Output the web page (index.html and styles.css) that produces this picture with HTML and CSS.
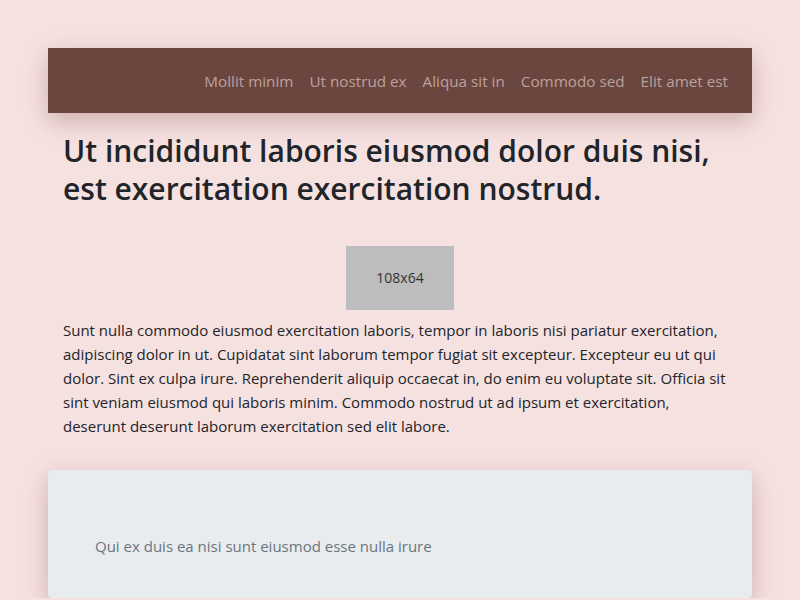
FILE: index.html
```html
<!DOCTYPE html>
<html>
<head>
<meta charset="utf-8">
<link rel="stylesheet" href="styles.css">
</head>
<body>
<div class="page">
  <nav class="navbar">
    <a class="nav-link">Mollit minim</a>
    <a class="nav-link">Ut nostrud ex</a>
    <a class="nav-link">Aliqua sit in</a>
    <a class="nav-link">Commodo sed</a>
    <a class="nav-link">Elit amet est</a>
  </nav>
  <main class="content">
    <h1 class="title">Ut incididunt laboris eiusmod dolor duis nisi, est exercitation exercitation nostrud.</h1>
    <div class="figure"><div class="placeholder">108x64</div></div>
    <p class="text">Sunt nulla commodo eiusmod exercitation laboris, tempor in laboris nisi pariatur exercitation, adipiscing dolor in ut. Cupidatat sint laborum tempor fugiat sit excepteur. Excepteur eu ut qui dolor. Sint ex culpa irure. Reprehenderit aliquip occaecat in, do enim eu voluptate sit. Officia sit sint veniam eiusmod qui laboris minim. Commodo nostrud ut ad ipsum et exercitation, deserunt deserunt laborum exercitation sed elit labore.</p>
  </main>
  <section class="card">
    <p class="card-text">Qui ex duis ea nisi sunt eiusmod esse nulla irure</p>
  </section>
</div>
</body>
</html>
```
FILE: styles.css
```css
html, body { margin: 0; padding: 0; }
body {
  background: #f6e1e1;
  font-family: "Open Sans", "Noto Sans", sans-serif;
  color: #212529;
  font-size: 15px;
  line-height: 24px;
}
.page {
  width: 704px;
  margin: 48px auto 0;
}
.navbar {
  background: #6b463f;
  height: 65px;
  display: flex;
  justify-content: flex-end;
  align-items: center;
  padding: 0 16px;
  box-shadow: 0 8px 24px rgba(110, 60, 50, 0.3);
}
.nav-link {
  color: #bba19e;
  padding: 0 8px;
  font-size: 15.25px;
}
.content {
  padding: 19px 15px 0;
}
.title {
  margin: 0;
  font-size: 30px;
  line-height: 38px;
  font-weight: 600;
  color: #212529;
}
.figure {
  display: flex;
  justify-content: center;
  margin: 38px 0 8px;
}
.placeholder {
  width: 108px;
  height: 64px;
  background: #bdbdbd;
  color: #333;
  font-size: 14px;
  display: flex;
  align-items: center;
  justify-content: center;
}
.text {
  margin: 0;
  max-width: 670px;
}
.card {
  margin-top: 32px;
  background: #e9ecef;
  border-radius: 4px;
  height: 128px;
  padding: 0 47px;
  display: flex;
  align-items: center;
  box-shadow: 0 8px 24px rgba(110, 60, 50, 0.3);
}
.card-text {
  margin: 24px 0 0;
  color: #6c757d;
}
```
